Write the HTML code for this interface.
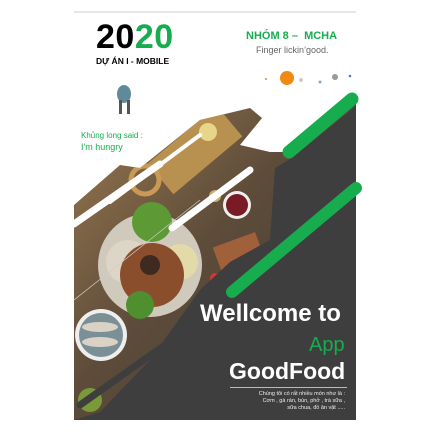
<!DOCTYPE html>
<html><head><meta charset="utf-8"><style>
body{margin:0;width:432px;height:432px;background:#fff;overflow:hidden;position:relative;font-family:"Liberation Sans",sans-serif}
.t{position:absolute;white-space:nowrap}
</style></head><body>
<svg width="432" height="432" style="position:absolute;left:0;top:0">
<defs>
<clipPath id="food"><polygon points="74,420 74,205 120,165 140,168 200,120 250,108 262,118 240,145 270,152 285,152 356,100 356,420"/></clipPath>
<linearGradient id="fg" x1="0" y1="0" x2="1" y2="1"><stop offset="0" stop-color="#9a7a50"/><stop offset="0.45" stop-color="#5e4c3a"/><stop offset="1" stop-color="#3a3a32"/></linearGradient>
</defs>
<line x1="74" y1="12" x2="356" y2="12" stroke="#ddd" stroke-width="1.5"/>
<g clip-path="url(#food)">
<rect x="74" y="100" width="282" height="320" fill="url(#fg)"/>
<rect x="150" y="130" width="90" height="40" fill="#b8904f" transform="rotate(-40 195 150)"/>
<circle cx="145" cy="180" r="14" fill="none" stroke="#c99a55" stroke-width="5"/>
<circle cx="150" cy="265" r="52" fill="#cfcabb"/>
<circle cx="128" cy="262" r="22" fill="#ddd6c6"/>
<circle cx="180" cy="262" r="18" fill="#e4d9a8"/>
<circle cx="152" cy="222" r="20" fill="#5d9a35"/>
<circle cx="152" cy="275" r="32" fill="#8a4e2c"/>
<circle cx="150" cy="265" r="10" fill="#3e2a20"/>
<circle cx="140" cy="305" r="14" fill="#4f8f2f"/>
<circle cx="237" cy="205" r="14" fill="#eee"/><circle cx="237" cy="205" r="11" fill="#7a1a25"/>
<circle cx="215" cy="196" r="6" fill="#c9b06a"/>
<circle cx="208" cy="132" r="9" fill="#e7d58a"/>
<rect x="215" y="240" width="45" height="25" fill="#a0603a" transform="rotate(-20 235 250)"/>
<circle cx="101" cy="335" r="26" fill="#eee"/><circle cx="101" cy="335" r="22" fill="#7a8f96"/>
<ellipse cx="100" cy="327" rx="18" ry="5" fill="#d9d2c5"/><ellipse cx="100" cy="342" rx="18" ry="5" fill="#d9d2c5"/>
<circle cx="197" cy="330" r="20" fill="#eee"/><circle cx="197" cy="330" r="16" fill="#cbb9a5"/>
<circle cx="140" cy="395" r="14" fill="#d8c8b8"/>
<circle cx="90" cy="400" r="12" fill="#7a9a3a"/>
<circle cx="215" cy="278" r="5" fill="#d33"/>
<line x1="74" y1="224" x2="160" y2="164" stroke="#fff" stroke-width="7" stroke-linecap="round"/>
<line x1="110" y1="202" x2="200" y2="135" stroke="#fff" stroke-width="4" stroke-linecap="round"/>
<line x1="172" y1="228" x2="250" y2="170" stroke="#fff" stroke-width="7" stroke-linecap="round"/>
<line x1="74" y1="300" x2="200" y2="200" stroke="#ccc" stroke-width="0.7"/>
<line x1="80" y1="405" x2="165" y2="345" stroke="#3e3e3e" stroke-width="7" stroke-linecap="round"/>
</g>
<polygon points="356,106 356,420 74,420 100,412 150,360 200,290 230,262 270,240 275,168 292,158" fill="#3e3e3e"/>
<line x1="289" y1="152" x2="352" y2="99" stroke="#17ad4e" stroke-width="13" stroke-linecap="round"/>
<line x1="232" y1="292" x2="356" y2="188" stroke="#17ad4e" stroke-width="12" stroke-linecap="round"/>
<circle cx="287" cy="78" r="7" fill="#f08a10"/>
<circle cx="301" cy="80" r="2" fill="#ccc"/><circle cx="335" cy="77" r="3" fill="#999"/><circle cx="320" cy="82" r="1.5" fill="#8ab"/><circle cx="350" cy="76" r="1.3" fill="#57c"/><circle cx="266" cy="79" r="1" fill="#c84"/>
<ellipse cx="124" cy="94" rx="7" ry="9" fill="#5f8a99"/><rect x="119" y="100" width="3" height="14" fill="#555"/><rect x="127" y="100" width="3" height="14" fill="#555"/>
</svg>
<div class="t" style="left:96px;top:18px;font-size:34px;font-weight:bold;letter-spacing:0.5px">20<span style="color:#17ad4e">20</span></div>
<div class="t" style="left:96px;top:56px;font-size:8.5px;font-weight:bold">DỰ ÁN I - MOBILE</div>
<div class="t" style="left:246px;top:30px;font-size:11px;font-weight:bold;color:#17ad4e">NHÓM 8 –&nbsp; MCHA</div>
<div class="t" style="left:256px;top:45px;font-size:9px;color:#666">Finger lickin’good.</div>
<div class="t" style="left:81px;top:131px;font-size:8px;color:#17ad4e">Khủng long said :</div>
<div class="t" style="left:81px;top:142px;font-size:9px;color:#17ad4e">I'm hungry</div>
<div class="t" style="left:200px;top:300px;font-size:24px;font-weight:bold;color:#fff">Wellcome to</div>
<div class="t" style="left:309px;top:334px;font-size:20px;color:#17ad4e">App</div>
<div class="t" style="left:229px;top:358px;font-size:23px;font-weight:bold;color:#fff">GoodFood</div>
<div style="position:absolute;left:230px;top:387px;width:117px;height:1px;background:#bbb"></div>
<div class="t" style="right:87px;top:391px;font-size:5.5px;line-height:7px;color:#eee;text-align:right">Chúng tôi có rất nhiều món như là :<br>Cơm , gà rán, bún, phở , trà sữa ,<br>sữa chua, đồ ăn vặt .....</div>
</body></html>
